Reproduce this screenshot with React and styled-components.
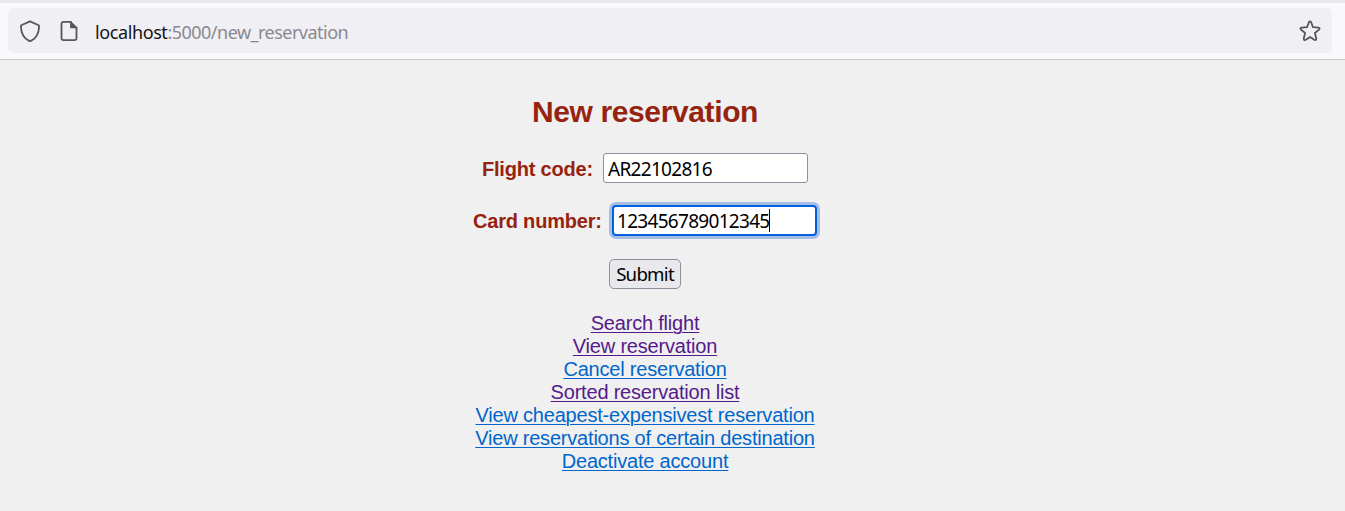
import React from "react";
import styled, { createGlobalStyle } from "styled-components";

const GlobalStyle = createGlobalStyle`
  *, *::before, *::after { box-sizing: border-box; }
  body {
    margin: 0;
    background: #f0f0f0;
    font-family: "Liberation Sans", Arial, sans-serif;
    overflow: hidden;
  }
`;

const Window = styled.div`
  height: 511px;
  display: flex;
  flex-direction: column;
`;

const Toolbar = styled.header`
  height: 60px;
  flex: none;
  padding: 5px 13px 6px 8px;
  background: #f9f9fb;
  border-top: 3px solid #e6eaed;
  border-bottom: 1px solid #cccccc;
`;

const AddressBar = styled.div`
  height: 45px;
  display: flex;
  align-items: center;
  padding: 0 11px;
  border-radius: 5px;
  background: #f0eff4;
`;

const Icon = styled.svg`
  width: 22px;
  height: 22px;
  flex: none;
  margin-right: ${(p) => p.$gap || 0}px;
  fill: none;
  stroke: #55555b;
  stroke-width: 1.8;
  stroke-linejoin: round;
`;

const Url = styled.div`
  flex: 1;
  padding-top: 2px;
  font: 18px/24px "Noto Sans", "Open Sans", sans-serif;
  letter-spacing: -0.52px;
  color: #8a898f;
  white-space: nowrap;
`;

const Host = styled.span`
  color: #15141a;
  letter-spacing: -0.4px;
`;

const Page = styled.main`
  width: 1290px;
  flex: 1;
  display: flex;
  flex-direction: column;
  align-items: center;
  padding-top: 34px;
`;

const Title = styled.h1`
  margin: 0 0 24px;
  font-size: 30px;
  line-height: 35px;
  font-weight: bold;
  letter-spacing: -0.38px;
  color: #96230f;
`;

const Field = styled.div`
  height: 30px;
  display: flex;
  align-items: center;
  margin-bottom: ${(p) => p.$below}px;
`;

const Label = styled.label`
  width: ${(p) => p.$width}px;
  font-size: 20px;
  line-height: 23px;
  font-weight: bold;
  letter-spacing: -0.2px;
  color: #96230f;
  white-space: nowrap;
  padding-top: 3px;
`;

const Input = styled.div`
  width: 205px;
  height: 30px;
  display: flex;
  align-items: center;
  padding: 1px 4px 0;
  border: 1px solid #8f8f9d;
  border-radius: 3px;
  background: #fff;
  color: #000;
  font: 19px/26px "Noto Sans", "Open Sans", sans-serif;
  letter-spacing: -0.7px;
  white-space: nowrap;
  ${(p) =>
    p.$focused &&
    `
    border: 2px solid #0060df;
    border-radius: 4px;
    padding: 1px 3px 0;
    height: 31px;
    box-shadow: 0 0 0 3px #a6bee5;
  `}
`;

const Caret = styled.span`
  width: 1px;
  height: 23px;
  margin-left: -1px;
  background: #000;
`;

const Submit = styled.button`
  width: 72px;
  height: 30px;
  margin: 0 0 23px;
  padding: 0;
  border: 1px solid #8f8f9d;
  border-radius: 5px;
  background: #e9e9ed;
  color: #000;
  font: 18.67px/26px "Noto Sans", "Open Sans", sans-serif;
  letter-spacing: -0.75px;
`;

const Links = styled.nav`
  display: flex;
  flex-direction: column;
  align-items: center;
`;

const Link = styled.a`
  font-size: 20px;
  line-height: 23px;
  letter-spacing: -0.2px;
  color: ${(p) => (p.$visited ? "#551a8b" : "#0066cc")};
  text-decoration: underline;
  text-decoration-thickness: 1px;
  text-underline-offset: 2px;
  white-space: nowrap;
`;

const links = [
  ["Search flight", true],
  ["View reservation", true],
  ["Cancel reservation", false],
  ["Sorted reservation list", true],
  ["View cheapest-expensivest reservation", false],
  ["View reservations of certain destination", false],
  ["Deactivate account", false],
];

export default function App() {
  return (
    <Window>
      <GlobalStyle />
      <Toolbar>
        <AddressBar>
          <Icon $gap={17} viewBox="0 0 22 22">
            <path d="M11 1.4 L19.2 5 Q20.2 5.4 20.1 6.5 C19.8 13.6 17.4 18.4 11.9 20.9 Q11 21.3 10.1 20.9 C4.6 18.4 2.2 13.6 1.9 6.5 Q1.8 5.4 2.8 5 Z" />
          </Icon>
          <Icon $gap={15} viewBox="0 0 22 22">
            <path d="M13.5 1.9H5.6Q3.5 1.9 3.5 4V18Q3.5 20.1 5.6 20.1H16.4Q18.5 20.1 18.5 18V7" />
            <path d="M12.8 1.9V7.6H18.5Z" fill="#55555b" stroke="#55555b" strokeWidth="1.4" />
          </Icon>
          <Url>
            <Host>localhost</Host>:5000/new_reservation
          </Url>
          <Icon viewBox="0 0 22 22">
            <path d="M9.9 2.2 Q11 .4 12.1 2.2 L14 7.2 L19.3 7.6 Q21.5 8 20 9.6 L15.9 13 L17.2 18.3 Q17.4 20.9 15.2 19.8 L11 17 L6.8 19.8 Q4.6 20.9 4.8 18.3 L6.1 13 L2 9.6 Q.5 8 2.7 7.6 L8 7.2 Z" />
          </Icon>
        </AddressBar>
      </Toolbar>
      <Page>
        <Title>New reservation</Title>
        <Field $below={22}>
          <Label $width={121}>Flight code:</Label>
          <Input>AR22102816</Input>
        </Field>
        <Field $below={24}>
          <Label $width={139}>Card number:</Label>
          <Input $focused>
            123456789012345
            <Caret />
          </Input>
        </Field>
        <Submit type="button">Submit</Submit>
        <Links>
          {links.map(([text, visited]) => (
            <Link key={text} $visited={visited}>{text}</Link>
          ))}
        </Links>
      </Page>
    </Window>
  );
}
